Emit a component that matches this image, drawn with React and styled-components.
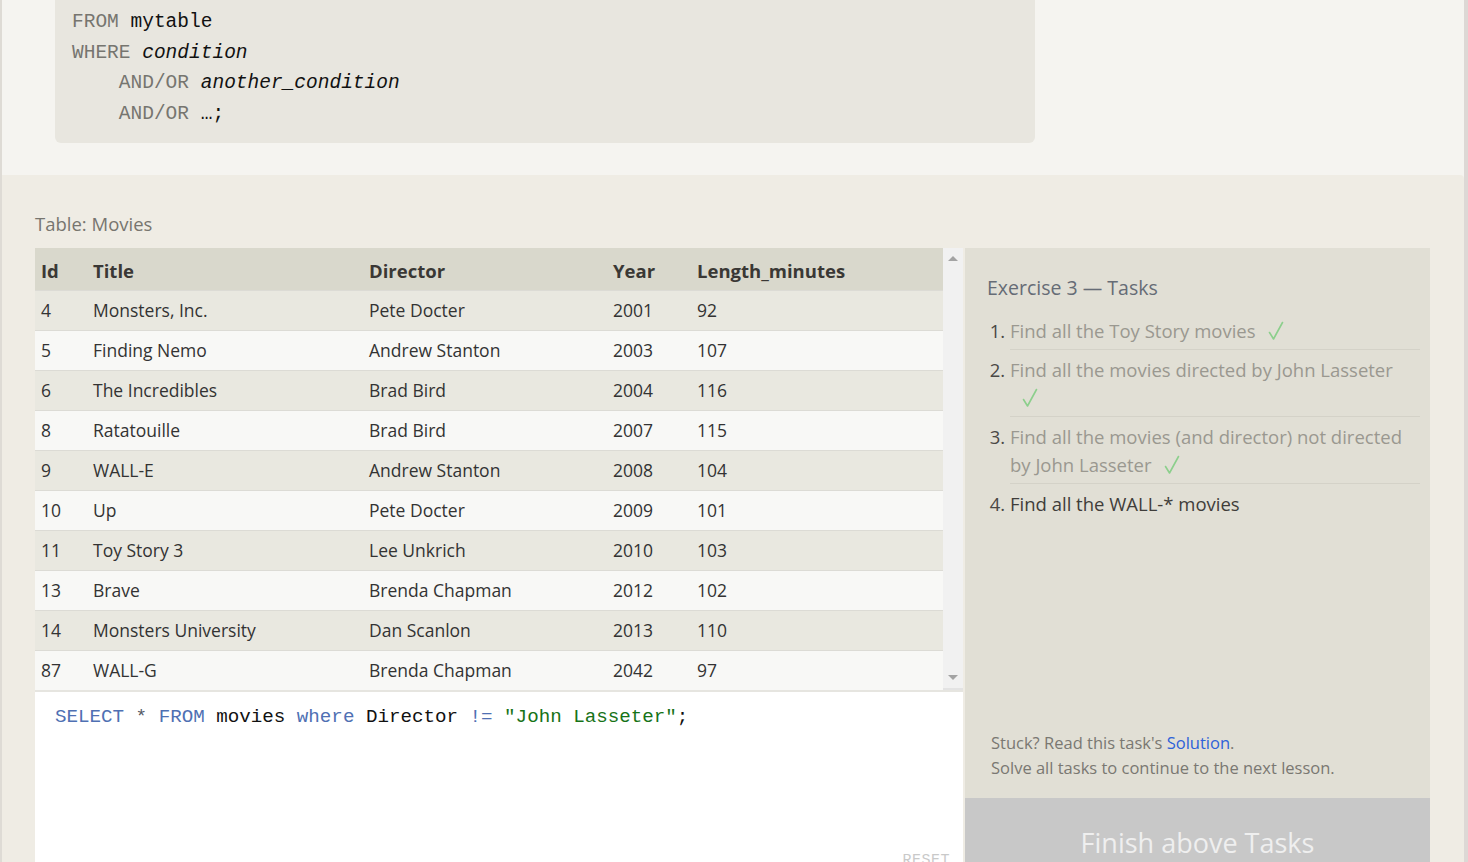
import React from "react";
import styled, { createGlobalStyle } from "styled-components";

const GlobalStyle = createGlobalStyle`
  html, body {
    margin: 0;
    padding: 0;
    overflow: hidden;
    background: #f5f4f0;
  }
  * {
    box-sizing: border-box;
  }
`;

const Page = styled.div`
  display: flex;
  flex-direction: column;
  height: 862px;
  overflow: hidden;
  border-left: 2px solid #dedbd5;
  border-right: 4px solid #ddd8d5;
  font-family: "Open Sans", "Noto Sans", sans-serif;
`;

const Syntax = styled.section`
  height: 175px;
  flex-shrink: 0;
  background: #f5f4f0;
  padding-left: 53px;
`;

const CodeBox = styled.pre`
  margin: 0;
  width: 980px;
  height: 143px;
  padding: 7px 0 0 17px;
  background: #e8e6df;
  border-radius: 0 0 6px 6px;
  font-family: "Liberation Mono", "DejaVu Sans Mono", monospace;
  font-size: 19.5px;
  line-height: 30.6px;
  color: #111;
`;

const Kw = styled.span`
  color: #76756f;
`;

const Em = styled.span`
  font-style: italic;
`;

const Lesson = styled.section`
  flex: 1;
  display: flex;
  flex-direction: column;
  min-height: 0;
  background: #efece4;
  border-top-right-radius: 4px;
  padding: 36px 34px 0 33px;
`;

const TableLabel = styled.div`
  font-size: 18.5px;
  line-height: 26px;
  color: #77756f;
  margin-bottom: 11px;
`;

const Workspace = styled.div`
  display: flex;
  gap: 2px;
  height: 640px;
  flex-shrink: 0;
`;

const LeftColumn = styled.div`
  width: 928px;
  display: flex;
  flex-direction: column;
`;

const TableArea = styled.div`
  display: flex;
  height: 442px;
  flex-shrink: 0;
`;

const Table = styled.table`
  width: 908px;
  table-layout: fixed;
  border-collapse: collapse;
  font-size: 17.5px;
  color: #333;
`;

const HeadCell = styled.th`
  height: 42px;
  padding: 3px 6px 0;
  text-align: left;
  font-weight: 700;
  font-size: 18.5px;
  color: #3a3835;
  background: #d9d8cc;
  white-space: nowrap;
`;

const Row = styled.tr`
  background: ${(p) => (p.$odd ? "#e9e8e0" : "#f8f8f6")};
  border-top: 1px solid #dcdbd5;
`;

const Cell = styled.td`
  height: 40px;
  padding: 0 6px;
  white-space: nowrap;
`;

const Scrollbar = styled.div`
  width: 20px;
  background: #f1f1f1;
  display: flex;
  flex-direction: column;
  justify-content: space-between;
  align-items: center;
  padding: 8px 0 8px;
  border-bottom: 2px solid #e3e3e3;
`;

const Arrow = styled.span`
  width: 0;
  height: 0;
  border-left: 5px solid transparent;
  border-right: 5px solid transparent;
  ${(p) =>
    p.$down
      ? "border-top: 5px solid #a3a3a3;"
      : "border-bottom: 5px solid #a3a3a3;"}
`;

const Editor = styled.div`
  position: relative;
  flex: 1;
  background: #fff;
  border-top: 2px solid #e6e5e0;
  padding: 12px 0 0 20px;
  font-family: "Liberation Mono", "DejaVu Sans Mono", monospace;
  font-size: 19.2px;
  line-height: 26px;
  color: #111;
  white-space: pre;
`;

const Tok = styled.span`
  color: ${(p) => p.$c};
`;

const Reset = styled.span`
  position: absolute;
  right: 13px;
  bottom: 14px;
  font-size: 15px;
  letter-spacing: 0.5px;
  color: #c9c9c9;
`;

const Tasks = styled.aside`
  width: 465px;
  background: #e1dfd5;
  display: flex;
  flex-direction: column;
`;

const TasksTitle = styled.h2`
  margin: 0;
  padding: 26px 0 0 22px;
  font-size: 19.5px;
  font-weight: 400;
  line-height: 28px;
  color: #666c76;
`;

const TaskList = styled.ol`
  margin: 9px 10px 0 45px;
  padding: 0;
  font-size: 18.5px;
  line-height: 28px;
`;

const Task = styled.li`
  padding: 6px 0 4px;
  color: ${(p) => (p.$done ? "#9a9890" : "#3f3d3a")};
  border-bottom: ${(p) => (p.$last ? "none" : "1px solid #d4d2c8")};

  &::marker {
    color: #4a4845;
  }
`;

const CheckIcon = styled.svg`
  display: inline-block;
  margin-left: 12px;
  width: 16px;
  height: 20px;
  vertical-align: -3px;
`;

const Check = () => (
  <CheckIcon viewBox="0 0 16 20">
    <path
      d="M1.5 11.5 L5.5 18 L14.5 1.5"
      fill="none"
      stroke="#8ccf8c"
      strokeWidth="1.6"
      strokeLinecap="round"
      strokeLinejoin="round"
    />
  </CheckIcon>
);

const Spacer = styled.div`
  flex: 1;
`;

const Hint = styled.p`
  margin: 0 0 18px 26px;
  font-size: 16.5px;
  line-height: 25px;
  color: #7a7872;
`;

const SolutionLink = styled.a`
  color: #2e62d9;
  text-decoration: none;
`;

const FinishButton = styled.div`
  height: 90px;
  flex-shrink: 0;
  background: #c8c8c8;
  color: #efefef;
  font-size: 27px;
  display: flex;
  justify-content: center;
  padding-top: 26px;
`;

const movies = [
  [4, "Monsters, Inc.", "Pete Docter", 2001, 92],
  [5, "Finding Nemo", "Andrew Stanton", 2003, 107],
  [6, "The Incredibles", "Brad Bird", 2004, 116],
  [8, "Ratatouille", "Brad Bird", 2007, 115],
  [9, "WALL-E", "Andrew Stanton", 2008, 104],
  [10, "Up", "Pete Docter", 2009, 101],
  [11, "Toy Story 3", "Lee Unkrich", 2010, 103],
  [13, "Brave", "Brenda Chapman", 2012, 102],
  [14, "Monsters University", "Dan Scanlon", 2013, 110],
  [87, "WALL-G", "Brenda Chapman", 2042, 97],
];

const tasks = [
  { text: "Find all the Toy Story movies", done: true },
  { text: "Find all the movies directed by John Lasseter", done: true },
  { text: "Find all the movies (and director) not directed by John Lasseter", done: true },
  { text: "Find all the WALL-* movies", done: false },
];

const KW = "#4f70b3";
const STR = "#177317";

export default function App() {
  return (
    <>
      <GlobalStyle />
      <Page>
        <Syntax>
          <CodeBox>
            <Kw>FROM</Kw> mytable{"\n"}
            <Kw>WHERE</Kw> <Em>condition</Em>{"\n"}
            {"    "}<Kw>AND/OR</Kw> <Em>another_condition</Em>{"\n"}
            {"    "}<Kw>AND/OR</Kw> …;
          </CodeBox>
        </Syntax>
        <Lesson>
          <TableLabel>Table: Movies</TableLabel>
          <Workspace>
            <LeftColumn>
              <TableArea>
                <Table>
                  <colgroup>
                    <col style={{ width: 52 }} />
                    <col style={{ width: 276 }} />
                    <col style={{ width: 244 }} />
                    <col style={{ width: 84 }} />
                    <col style={{ width: 252 }} />
                  </colgroup>
                  <thead>
                    <tr>
                      <HeadCell>Id</HeadCell>
                      <HeadCell>Title</HeadCell>
                      <HeadCell>Director</HeadCell>
                      <HeadCell>Year</HeadCell>
                      <HeadCell>Length_minutes</HeadCell>
                    </tr>
                  </thead>
                  <tbody>
                    {movies.map((m, i) => (
                      <Row key={m[0]} $odd={i % 2 === 0}>
                        {m.map((v, j) => (
                          <Cell key={j}>{v}</Cell>
                        ))}
                      </Row>
                    ))}
                  </tbody>
                </Table>
                <Scrollbar>
                  <Arrow />
                  <Arrow $down />
                </Scrollbar>
              </TableArea>
              <Editor>
                <Tok $c={KW}>SELECT</Tok> <Tok $c="#555a66">*</Tok> <Tok $c={KW}>FROM</Tok> movies{" "}
                <Tok $c={KW}>where</Tok> Director <Tok $c={KW}>!=</Tok>{" "}
                <Tok $c={STR}>"John Lasseter"</Tok>;
                <Reset>RESET</Reset>
              </Editor>
            </LeftColumn>
            <Tasks>
              <TasksTitle>Exercise 3 — Tasks</TasksTitle>
              <TaskList>
                {tasks.map((t, i) => (
                  <Task key={i} $done={t.done} $last={i === tasks.length - 1}>
                    {t.text}
                    {t.done && <Check />}
                  </Task>
                ))}
              </TaskList>
              <Spacer />
              <Hint>
                Stuck? Read this task's <SolutionLink href="#">Solution</SolutionLink>.
                <br />
                Solve all tasks to continue to the next lesson.
              </Hint>
              <FinishButton>Finish above Tasks</FinishButton>
            </Tasks>
          </Workspace>
        </Lesson>
      </Page>
    </>
  );
}
